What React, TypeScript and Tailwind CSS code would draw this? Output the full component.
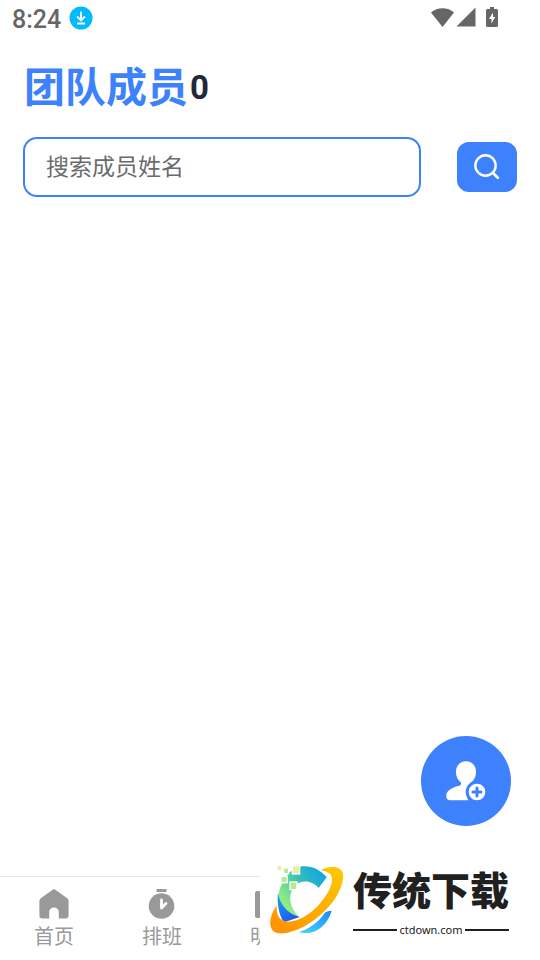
import type { ReactNode } from 'react';

const tabs: { label: string; icon: ReactNode }[] = [
  { label: '首页', icon: <HomeIcon /> },
  { label: '排班', icon: <TimerIcon /> },
  { label: '明细', icon: <DetailIcon /> },
];

export default function App() {
  return (
    <div className="flex min-h-screen flex-col bg-white font-['Roboto','Noto_Sans_CJK_SC',sans-serif]">
      <StatusBar />

      <main className="flex-1 px-6 pt-6">
        {/* Title */}
        <h1 className="flex h-14 items-center">
          <span className="text-[41px] leading-14 font-bold text-[#3d81fd]">团队成员</span>
          <span className="pl-0.5 text-[33px] leading-10 font-bold text-[#1f2937]">0</span>
        </h1>

        {/* Search */}
        <form className="-mx-px mt-[21px] flex items-center gap-9" onSubmit={(e) => e.preventDefault()}>
          <input
            type="text"
            aria-label="搜索成员姓名"
            placeholder="搜索成员姓名"
            className="h-15 min-w-0 flex-1 rounded-[14px] border-2 border-[#3d81fd] px-[21px] text-[23px] text-gray-800 outline-none placeholder:text-[#6b6b6b]"
          />
          <button
            type="submit"
            aria-label="搜索"
            className="flex h-[50px] w-15 items-center justify-center rounded-xl bg-[#3d81fd]"
          >
            <svg viewBox="0 0 26 26" className="h-[26px] w-[26px]" fill="none" stroke="#fff">
              <circle cx="11.500" cy="11.500" r="10.200" strokeWidth="2.400" />
              <path d="M19 19l4.800 4.800" strokeWidth="2.800" strokeLinecap="round" />
            </svg>
          </button>
        </form>
      </main>

      {/* Bottom tabs */}
      <nav className="grid h-21 grid-cols-5 border-t border-[#e8e8e8]">
        {tabs.map((tab) => (
          <a
            key={tab.label}
            href="#"
            className="flex flex-col items-center pt-3 text-[20px] leading-7 text-[#999]"
          >
            {tab.icon}
            <span className="mt-1">{tab.label}</span>
          </a>
        ))}
      </nav>

      {/* Add member */}
      <button
        type="button"
        aria-label="添加成员"
        className="fixed right-[29px] bottom-[134px] flex h-[90px] w-[90px] items-center justify-center rounded-full bg-[#3d81fd]"
      >
        <svg viewBox="0 0 120 120" className="h-10 w-10">
          <path
            d="M60 1C78 1 90 14 90 32C90 48 84 56 76 64C76 70 78 73 82 74C68 82 60 100 67 118H16C4 118 0 112 1 101C3 87 22 78 40 74C46 73 46 68 44 64C35 56 30 47 30 32C30 14 42 1 60 1Z"
            fill="#fff"
          />
          <circle cx="93" cy="93" r="34" fill="#3d81fd" />
          <circle cx="93" cy="93" r="25" fill="#fff" />
          <path d="M93 81v24M81 93h24" stroke="#3d81fd" strokeWidth="9" strokeLinecap="round" />
        </svg>
      </button>

      <Brand />
    </div>
  );
}

function StatusBar() {
  return (
    <header className="flex h-9 items-center justify-between pr-[42px] pl-3 text-[#666]">
      <div className="flex items-center gap-2">
        <span className="pt-1 text-[25px] leading-8 font-medium">8:24</span>
        <svg viewBox="0 0 24 24" className="h-6 w-6">
          <circle cx="12" cy="12" r="11.5" fill="#00b9ff" />
          <path
            d="M12 5.500v8.500M8 10.500l4 4 4-4M8 17.500h8"
            fill="none"
            stroke="#fff"
            strokeWidth="1.8"
          />
        </svg>
      </div>
      <div className="flex items-center pb-0.5">
        <svg viewBox="0 0 23 20" className="h-5 w-[23px]" fill="currentColor">
          <path d="M11.5 20L0 5.5C6-.3 17-.3 23 5.5Z" />
        </svg>
        <svg viewBox="0 0 20 20" className="ml-0.5 h-5 w-5" fill="currentColor">
          <path d="M19.500 .5V19.500H.5Z" />
        </svg>
        <svg viewBox="0 0 12 20" className="ml-2.5 h-5 w-3" fill="currentColor">
          <path d="M4 0h4v2h2.500q1.500 0 1.500 1.500v15q0 1.500-1.500 1.500h-9q-1.500 0-1.500-1.500v-15q0-1.500 1.500-1.500h2.500z" />
          <path d="M7 5.500L3 12h2.500v4.500L9.200 10H7z" fill="#fff" />
        </svg>
      </div>
    </header>
  );
}

function HomeIcon() {
  return (
    <svg viewBox="0 0 30 30" className="h-[30px] w-[30px]" fill="currentColor">
      <path d="M13.300 .9q1.700-1.200 3.400 0l11.500 8.300q1.400 1 1.400 2.800v14.500q0 3-3 3h-6.800v-6.500c0-6-9.600-6-9.600 0v6.500h-6.800q-3 0-3-3v-14.500q0-1.800 1.400-2.800z" />
    </svg>
  );
}

function TimerIcon() {
  return (
    <svg viewBox="0 0 30 30" className="h-[30px] w-[30px]" fill="currentColor">
      <path d="M9.500 0h10v3h-10z" />
      <circle cx="14.500" cy="17" r="12.800" />
      <path
        d="M14.500 11v8l4.500-4.500"
        fill="none"
        stroke="#fff"
        strokeWidth="2.800"
        strokeLinecap="round"
        strokeLinejoin="round"
      />
    </svg>
  );
}

function DetailIcon() {
  return (
    <svg viewBox="0 0 30 30" className="h-[30px] w-[30px]" fill="currentColor">
      <rect x="0" y="2" width="30" height="27" rx="2" />
    </svg>
  );
}

function Brand() {
  return (
    <aside className="fixed right-0 bottom-0 flex h-[104px] w-[280px] bg-white pt-[9px] pl-2.5 text-[#202020]">
      <BrandLogo />
      <div className="ml-[9px] w-[156px]">
        <p className="text-[39px] leading-[54px] font-black whitespace-nowrap">传统下载</p>
        <div className="flex items-center gap-0.5 font-['Noto_Sans','Open_Sans',sans-serif] text-[11px] leading-[22px]">
          <span className="h-0.5 flex-1 bg-[#202020]" />
          <span>ctdown.com</span>
          <span className="h-0.5 flex-1 bg-[#202020]" />
        </div>
      </div>
    </aside>
  );
}

function BrandLogo() {
  return (
    <svg viewBox="210 30 222 210" className="h-[70px] w-[74px] shrink-0">
      <defs>
        <linearGradient id="cBody" x1="1" y1="0" x2="0.200" y2="0.700">
          <stop offset="0" stopColor="#079df2" />
          <stop offset="0.500" stopColor="#30bdbb" />
          <stop offset="1" stopColor="#90ec80" />
        </linearGradient>
        <linearGradient id="cShade" x1="0" y1="0" x2="0.600" y2="1">
          <stop offset="0" stopColor="#16a7f3" />
          <stop offset="1" stopColor="#2454f5" />
        </linearGradient>
        <linearGradient id="cTail" x1="0" y1="1" x2="1" y2="0">
          <stop offset="0" stopColor="#46d5ff" />
          <stop offset="1" stopColor="#168df3" />
        </linearGradient>
        <linearGradient id="orbit" x1="0" y1="1" x2="1" y2="0">
          <stop offset="0" stopColor="#ff8f00" />
          <stop offset="1" stopColor="#ffca00" />
        </linearGradient>
      </defs>
      <path
        d="M300 35C330 30 359 42 380 67L356 99C340 79 311 73 291 87C262 108 264 156 298 186L252 202C229 170 229 116 247 84C258 60 277 40 300 35Z"
        fill="url(#cBody)"
      />
      <path d="M234 112C238 149 263 176 299 186L252 202C238 183 230 145 234 112Z" fill="url(#cShade)" />
      <path d="M297 231C332 219 354 203 374 174Q378 168 395 167C382 213 342 244 297 231Z" fill="url(#cTail)" />
      <path
        d="M362 45C391 31 421 33 428 53C435 76 417 121 387 154C345 204 277 240 235 235C202 228 205 187 230 151C229 180 237 199 264 200C304 200 346 166 370 133C392 105 406 68 388 55Q380 49 362 45Z"
        fill="url(#orbit)"
      />
      {/* Pixel squares */}
      <g stroke="#fff" strokeWidth="8" paintOrder="stroke">
        <rect x="233" y="33" width="11" height="12" fill="#e8f29b" />
        <rect x="252" y="41" width="12" height="13" fill="#b9ea91" />
        <rect x="279" y="34" width="18" height="21" fill="#e8f29b" />
        <rect x="245" y="66" width="15" height="15" fill="#b4ed8b" />
        <rect x="272" y="83" width="17" height="19" fill="#b4ed8b" />
      </g>
    </svg>
  );
}
